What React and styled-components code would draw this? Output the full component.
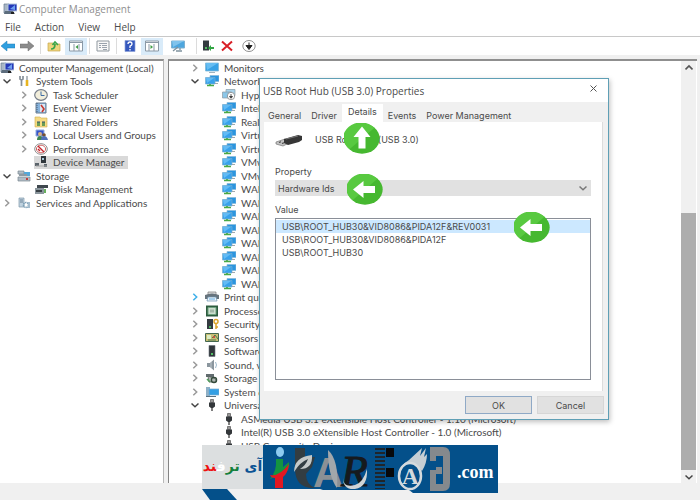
import React from 'react';
import styled, { createGlobalStyle } from 'styled-components';

const GlobalStyle = createGlobalStyle`
  * {
    box-sizing: border-box;
  }

  body {
    margin: 0;
    background: #f0f0f0;
    color: #4a4a4a;
    font-family: 'Open Sans', 'Noto Sans', sans-serif;
    font-size: 10px;
  }

  button, select {
    font: inherit;
    color: inherit;
  }

  svg {
    display: block;
    flex: none;
  }
`;

const Screen = styled.div`
  position: relative;
  display: flex;
  flex-direction: column;
  height: 100vh;
  overflow: hidden;
`;

const TitleBar = styled.header`
  display: flex;
  align-items: center;
  gap: 2px;
  height: 18px;
  padding: 0 3px;
  background: #fff;
  color: #8f8f8f;
`;

const MenuBar = styled.nav`
  display: flex;
  align-items: center;
  height: 19px;
  padding-left: 5px;
  gap: 14px;
  background: #fff;
  border-bottom: 1px solid #c8c8c8;
`;

const MenuButton = styled.button`
  padding: 0;
  border: 0;
  background: none;
`;

const Toolbar = styled.div`
  display: flex;
  align-items: center;
  height: 22px;
  background: #fff;
  border-bottom: 4px solid #f0f0f0;
`;

const ToolButton = styled.button`
  display: flex;
  align-items: center;
  justify-content: center;
  width: ${({ $width }) => $width || 22}px;
  height: 17px;
  padding: 0;
  border: 0;
  background: ${({ $active }) => ($active ? '#d9ebf9' : 'none')};
`;

const Separator = styled.span`
  width: 1px;
  height: 16px;
  margin: 0 ${({ $gap }) => $gap || 2}px;
  background: #dcdcdc;
`;

const Body = styled.main`
  flex: 1;
  display: flex;
  gap: 4px;
  min-height: 0;
  padding-right: 3px;
`;

const Pane = styled.section`
  display: flex;
  min-width: 0;
  background: #fff;
  border-top: 2px solid #8f8f8f;
`;

const TreePane = styled(Pane)`
  width: 164px;
  border-right: 1px solid #b8b8b8;
`;

const DevicePane = styled(Pane)`
  flex: 1;
  border-left: 1px solid #858585;
`;

const Tree = styled.ul`
  flex: 1;
  min-width: 0;
  margin: 0;
  padding: 0;
  list-style: none;
  overflow: hidden;
  font-family: Lato, 'Open Sans', sans-serif;
`;

const Row = styled.li`
  display: flex;
  align-items: center;
  height: 13px;
  padding-left: ${({ $indent }) => $indent}px;
  white-space: nowrap;

  &:nth-child(even) {
    height: 14px;
  }
`;

const Arrow = styled.span`
  display: flex;
  justify-content: center;
  width: 10px;
  margin-right: 5px;
`;

const Label = styled.span`
  display: flex;
  align-items: center;
  gap: 5px;
  height: 13px;
  padding-right: 3px;
  background: ${({ $selected }) => ($selected ? '#d9d9d9' : 'none')};
`;

const ScrollBar = styled.div`
  display: flex;
  flex-direction: column;
  width: 16px;
  background: #f0f0f0;
  border-right: 1px solid #fff;
`;

const ScrollButton = styled.button`
  display: flex;
  align-items: center;
  justify-content: center;
  height: 13px;
  padding: 0;
  border: 0;
  background: #f0f0f0;
`;

const ScrollTrack = styled.div`
  flex: 1;
  display: flex;
  flex-direction: column;
  justify-content: flex-end;
`;

const ScrollThumb = styled.div`
  height: 65%;
  background: #adadad;
`;

const StatusBar = styled.footer`
  height: 17px;
  background: #f0f0f0;
`;

/* properties window */

const Dialog = styled.div`
  position: absolute;
  left: 37%;
  top: 78px;
  width: 50%;
  display: flex;
  flex-direction: column;
  background: #f0f0f0;
  border: 1px solid #5f9fb5;
  box-shadow: 1px 2px 5px rgba(0, 0, 0, 0.25);
  font-family: Inter, 'Liberation Sans', sans-serif;
  font-size: 9px;
`;

const DialogTitle = styled.div`
  display: flex;
  align-items: center;
  justify-content: space-between;
  height: 23px;
  padding: 0 11px 0 3px;
  background: #fff;
  font-family: 'Open Sans', 'Noto Sans', sans-serif;
  font-size: 10px;
`;

const CloseButton = styled.button`
  display: flex;
  padding: 0 0 4px;
  border: 0;
  background: none;
`;

const Tabs = styled.div`
  display: flex;
  align-items: flex-end;
  height: 20px;
  padding-left: 3px;
`;

const Tab = styled.button`
  height: ${({ $active }) => ($active ? 18 : 16)}px;
  padding: ${({ $active }) => ($active ? '0 6px 3px' : '2px 5px 0')};
  border: 0;
  background: ${({ $active }) => ($active ? '#fff' : '#f0f0f0')};
`;

const TabPanel = styled.div`
  display: flex;
  flex-direction: column;
  margin: 0 5px 0 4px;
  padding: 10px 11px 11px 11px;
  background: #fff;
  border-right: 1px solid #dcdcdc;
`;

const Device = styled.div`
  display: flex;
  align-items: flex-start;
  gap: 12px;
  height: 34px;
`;

const DeviceName = styled.span`
  padding-top: 2px;
`;

const FieldLabel = styled.label`
  height: 14px;
  line-height: 12px;
`;

const SelectBox = styled.div`
  display: grid;
  align-items: center;
  margin-bottom: 8px;
  background: #e1e1e1;

  > * {
    grid-area: 1 / 1;
  }

  svg {
    justify-self: end;
    margin-right: 4px;
    pointer-events: none;
  }
`;

const Select = styled.select`
  appearance: none;
  height: 16px;
  padding: 0 3px;
  border: 0;
  background: none;
`;

const ValueList = styled.ul`
  height: 162px;
  margin: 0;
  padding: 1px 0;
  list-style: none;
  border: 1px solid #8a8f98;
`;

const Value = styled.li`
  height: 13px;
  padding-left: 6px;
  line-height: 13px;
  background: ${({ $selected }) => ($selected ? '#cce8ff' : 'none')};
`;

const Actions = styled.div`
  display: flex;
  justify-content: flex-end;
  gap: 5px;
  padding: 5px 4px 5px;
`;

const ActionButton = styled.button`
  width: 67px;
  height: 18px;
  padding: 0;
  border: 1px solid ${({ $primary }) => ($primary ? '#8fa9c6' : '#d6d6d6')};
  background: #e1e1e1;
`;

const Marker = styled.span`
  position: absolute;
  left: ${({ $x }) => $x}%;
  top: ${({ $y }) => $y}px;
`;

/* site banner */

const Banner = styled.div`
  position: absolute;
  left: 202px;
  top: 445px;
  display: flex;
  align-items: flex-start;
`;

const BannerName = styled.div`
  width: 61px;
  height: 44px;
  background: #dcdfe0;
  color: #0b5394;
  font: bold 14px/42px 'DejaVu Sans', sans-serif;
  text-align: center;
  white-space: nowrap;
`;

const Tint = styled.span`
  color: ${({ $color }) => $color};
`;

const BannerTail = styled.svg`
  position: absolute;
  left: 0;
  top: 44px;
`;

const Chevron = ({ open, color = open ? '#444' : '#9a9a9a' }) => (
  <svg width="8" height="8" viewBox="0 0 8 8" fill="none" stroke={color} strokeWidth="1.5">
    <path d={open ? 'M0.5 2.5L4 5.7L7.5 2.5' : 'M2.3 0.8L5.7 4L2.3 7.2'} />
  </svg>
);

const shapes = {
  computer: (
    <>
      <path d="M1 1h5v9H1z" fill="#a9b7c6" stroke="#66788c" strokeWidth=".7" />
      <path d="M5 1h9v7H5z" fill="#2538b8" stroke="#b6c7dc" />
      <path d="M7 6l5-4v5z" fill="#6fa0f0" />
      <path d="M2 8h8l2 3H1z" fill="#5d6d7d" />
      <path d="M8 9h3v2H8z" fill="#222" />
    </>
  ),
  tools: (
    <>
      <path d="M3 1v3l1.5 1L6 4V1M4.500 5v6" stroke="#858f98" strokeWidth="1.7" fill="none" />
      <path d="M10 1v5" stroke="#8a949c" strokeWidth="1.300" />
      <path d="M10 5v6" stroke="#e8b420" strokeWidth="2.600" />
    </>
  ),
  clock: (
    <>
      <ellipse cx="7" cy="6" rx="6.300" ry="5.300" fill="#f2eedb" stroke="#747c88" strokeWidth="1.200" />
      <path d="M7 2.500V6.500h3.500" stroke="#3d6ca5" fill="none" />
    </>
  ),
  event: (
    <>
      <path d="M2 1h10v10H2z" fill="#86b3dd" stroke="#6b7f93" />
      <path d="M6 2h5v8H6z" fill="#d7e6f5" />
      <path d="M7 3l3 4-2 3" stroke="#c8372d" strokeWidth="1.600" fill="none" />
      <path d="M3 1v10" stroke="#49617a" strokeDasharray="1 1" />
    </>
  ),
  folder: (
    <>
      <path d="M1 1h5l1 1h6v9H1z" fill="#f6db83" stroke="#d2b04c" strokeWidth=".6" />
      <path d="M3 6h3v4H3zM8 6h3v4H8z" fill="#6b9c55" />
      <path d="M3 6h3M8 6h3" stroke="#34536e" />
    </>
  ),
  users: (
    <>
      <path d="M2 1h8v6H2z" fill="#3655c8" stroke="#93aee0" />
      <circle cx="6" cy="5" r="2" fill="#d9b48a" />
      <path d="M3 11q0-4 3-4t3 4z" fill="#3e8650" />
      <circle cx="10" cy="6" r="1.800" fill="#76512f" />
      <path d="M7 11q0-4 3-4t4 4z" fill="#5070b8" />
    </>
  ),
  performance: (
    <>
      <ellipse cx="7" cy="6" rx="6.300" ry="5.300" fill="#fff" stroke="#8b8b8b" />
      <ellipse cx="7" cy="6" rx="4.600" ry="3.800" fill="none" stroke="#cf6464" />
      <path d="M4 3l6 6M4 6l2 2" stroke="#c4232b" strokeWidth="1.400" />
    </>
  ),
  device: (
    <>
      <path d="M7 0h5v7H7z" fill="#30363b" />
      <path d="M8 2h2v2H8z" fill="#a8c8d8" />
      <path d="M1 7h4v3H1zM10 8h3v3h-3z" fill="#5b646b" />
      <path d="M2 10h11" stroke="#a6a6a6" />
    </>
  ),
  storage: (
    <>
      <path d="M1 1h6v3H1zM1 7h12v4H1z" fill="#b2bdc6" stroke="#7a8791" strokeWidth=".7" />
      <path d="M7 2h6v4H7z" fill="#54a8da" />
      <path d="M2 5h8" stroke="#8d9aa4" strokeWidth="2" />
      <path d="M9 8h2v2H9z" fill="#c04040" />
    </>
  ),
  disk: (
    <>
      <path d="M3 2h11v3H3z" fill="#3f484e" />
      <path d="M1 5h9v6H1z" fill="#8b969d" />
      <path d="M2 7h6v2H2z" fill="#394146" />
      <path d="M10 6h2v4h-2z" fill="#67af5c" />
    </>
  ),
  services: (
    <>
      <path d="M2 1h5v9H2z" fill="#c0d2df" stroke="#7e98ab" strokeWidth=".7" />
      <path d="M3 3h3M3 5h3" stroke="#6a8296" />
      <circle cx="9" cy="8" r="2.500" fill="none" stroke="#7da0b8" strokeWidth="1.600" strokeDasharray="1.500 .6" />
      <path d="M11 5h2v6h-2z" fill="#a4bccd" />
    </>
  ),
  monitor: (
    <>
      <path d="M0.500 1h13v8h-13z" fill="#38a2e6" stroke="#82b7d6" strokeWidth=".8" />
      <path d="M1 1h12L2 8z" fill="#66bdf2" />
      <path d="M4 10.500h6" stroke="#9fb4c0" />
    </>
  ),
  network: (
    <>
      <path d="M5 .5h9v6H5z" fill="#2b95df" stroke="#8abada" strokeWidth=".7" />
      <path d="M.5 2.500h9.500v6.500h-9.500z" fill="#38a2ec" stroke="#77aed0" strokeWidth=".7" />
      <path d="M1 3h8L2 8z" fill="#62bbf5" />
      <path d="M5 9v2M2 10.500h7" stroke="#48a947" strokeWidth="1.700" />
      <path d="M10 8.500h3" stroke="#9fa9ad" />
    </>
  ),
  networkOff: (
    <>
      <path d="M4 .5h9v6H4z" fill="#a8d3ec" stroke="#879da8" strokeWidth=".7" />
      <path d="M.5 3h9v6h-9z" fill="#8bc7e9" stroke="#8b9aa3" strokeWidth=".7" />
      <circle cx="9" cy="7" r="3.700" fill="#fff" stroke="#777" strokeWidth=".7" />
      <path d="M9 5v3M7.500 7.500h3L9 9.300z" fill="#333" stroke="#333" strokeWidth=".8" />
    </>
  ),
  printer: (
    <>
      <path d="M3 1h8v3H3z" fill="#ddd" stroke="#777" strokeWidth=".7" />
      <path d="M0 4q7-3 14 0v4H0z" fill="#68747d" />
      <path d="M3 6h8l1 4H2z" fill="#eef5fb" stroke="#6892b2" strokeWidth=".7" />
      <path d="M4 8h6" stroke="#61a9de" />
    </>
  ),
  cpu: (
    <>
      <path d="M1 .5h12v11H1z" fill="#2d5c3f" />
      <path d="M3 2.500h8v7H3z" fill="#cddfd0" stroke="#6ea27e" />
      <path d="M5 4.500h4v3H5z" fill="#a2b8a7" />
    </>
  ),
  security: (
    <>
      <path d="M2 1h6v10H2z" fill="#343b40" />
      <path d="M4 8h2v2H4z" fill="#47b45b" />
      <circle cx="11" cy="3.500" r="2" fill="none" stroke="#dda42b" strokeWidth="1.500" />
      <path d="M11 6v5M11 9h2" stroke="#dda42b" strokeWidth="1.500" />
    </>
  ),
  sensor: (
    <>
      <path d="M.5 1.500h13v8H.5z" fill="#c9bd75" stroke="#44684f" />
      <path d="M2 3h4v4H2z" fill="#dcecc1" />
      <path d="M7 6l3-3 3 4M3 8h8" stroke="#4b7d52" fill="none" />
      <path d="M8 4h2v2H8z" fill="#c95340" />
    </>
  ),
  software: (
    <>
      <path d="M4 .5h6v11H4z" fill="#30363a" stroke="#687178" strokeWidth=".6" />
      <path d="M6 8h2v2H6z" fill="#54bf66" />
    </>
  ),
  sound: (
    <>
      <path d="M2 4h3l4-3.500v11L5 8H2z" fill="#8b969e" />
      <path d="M6 3v6" stroke="#bfc7cc" />
      <path d="M10.500 3q2 3 0 6" stroke="#9eb9cb" fill="none" />
    </>
  ),
  controller: (
    <>
      <path d="M1 2h8v3H1z" fill="#626c70" />
      <path d="M3 4l8 3v3H4z" fill="#aeb6b2" stroke="#525c58" strokeWidth=".8" />
      <circle cx="9" cy="8" r="2.600" fill="none" stroke="#334a3a" strokeWidth="1.300" />
      <path d="M2 7l3 3" stroke="#51a05a" strokeWidth="1.500" />
    </>
  ),
  system: (
    <>
      <path d="M1 1h4v9H1z" fill="#8fb0c6" />
      <path d="M4 3h10v6H4z" fill="#339fe4" stroke="#78acd0" strokeWidth=".7" />
      <path d="M1 10.500h10" stroke="#59707f" />
    </>
  ),
  usb: (
    <>
      <path d="M5.500 .5h3v3h-3z" fill="#999" stroke="#555" strokeWidth=".7" />
      <path d="M4 3.500h6v4L8 9H6L4 7.500z" fill="#33373a" />
      <path d="M7 9v3" stroke="#555" strokeWidth="1.500" />
    </>
  ),
  back: <path d="M0 6l6-5v3h8v4H6v3z" fill="#2f9fe0" stroke="#237db3" strokeWidth=".5" />,
  forward: <path d="M14 6L8 1v3H0v4h8v3z" fill="#8b8b8b" stroke="#6d6d6d" strokeWidth=".5" />,
  up: (
    <>
      <path d="M1 3h5l1 1h6v7H1z" fill="#efd47d" stroke="#c5a64d" strokeWidth=".7" />
      <path d="M4 9q4 0 4-5M5.500 5L8 2l3 3" stroke="#39a54a" strokeWidth="1.700" fill="none" />
    </>
  ),
  panelLeft: (
    <>
      <path d="M.5 1h13v10H.5z" fill="#fff" stroke="#8b99a6" />
      <path d="M1 2.500h12M5 4v7M10 4v7" stroke="#8b99a6" />
      <path d="M9 5v4L6.500 7z" fill="#3e9c44" />
    </>
  ),
  panelRight: (
    <>
      <path d="M.5 1h13v10H.5z" fill="#fff" stroke="#8b99a6" />
      <path d="M1 2.500h12M4 4v7M9 4v7" stroke="#8b99a6" />
      <path d="M5.500 5v4L8 7z" fill="#3e9c44" />
    </>
  ),
  properties: (
    <>
      <path d="M1 1h12v10H1z" fill="#f8f8f8" stroke="#8f989f" />
      <path d="M3 3.500h8M3 5.500h2M6 5.500h5M3 7.500h2M6 7.500h5M7 9.500h4" stroke="#9aa3ad" />
    </>
  ),
  help: (
    <>
      <path d="M2 .5h10v11H2z" fill="#3558bd" stroke="#8da0d8" strokeWidth=".7" />
      <path d="M5 4q0-2 2-2t2 2q0 1.200-2 2.200V8M7 9v1.500" stroke="#fff" strokeWidth="1.300" fill="none" />
    </>
  ),
  scan: (
    <>
      <path d="M.5 1h13v7H.5z" fill="#4da6de" stroke="#7eb1d1" />
      <path d="M2 11l5-4M9 8v2M5 11h6" stroke="#7f929e" strokeWidth="1.300" />
      <path d="M1 1h12L2 7z" fill="#80c3ec" />
    </>
  ),
  update: (
    <>
      <path d="M2 .5h6v10H2z" fill="#343b40" />
      <path d="M4 7h2v2H4z" fill="#54bf66" />
      <path d="M7 8l3-3v2h3v2h-3v2z" fill="#33a644" />
    </>
  ),
  remove: <path d="M2 1.500l10 9M12 1.500l-10 9" stroke="#d81f26" strokeWidth="2" />,
  disable: (
    <>
      <ellipse cx="7" cy="6" rx="6.200" ry="5.500" fill="#fff" stroke="#777" strokeWidth=".8" />
      <path d="M7 2.500v4M4 5.500h6L7 9.500z" fill="#222" stroke="#222" strokeWidth="1" />
    </>
  ),
};

const Icon = ({ name }) => (
  <svg width="14" height="12" viewBox="0 0 14 12">
    {shapes[name]}
  </svg>
);

const consoleTree = [
  { text: 'System Tools', icon: 'tools', level: 0, open: true },
  { text: 'Task Scheduler', icon: 'clock', level: 1, open: false },
  { text: 'Event Viewer', icon: 'event', level: 1, open: false },
  { text: 'Shared Folders', icon: 'folder', level: 1, open: false },
  { text: 'Local Users and Groups', icon: 'users', level: 1, open: false },
  { text: 'Performance', icon: 'performance', level: 1, open: false },
  { text: 'Device Manager', icon: 'device', level: 1, selected: true },
  { text: 'Storage', icon: 'storage', level: 0, open: true },
  { text: 'Disk Management', icon: 'disk', level: 1 },
  { text: 'Services and Applications', icon: 'services', level: 0, open: false },
];

const adapters = [
  'Hyper-V Virtual Ethernet Adapter',
  'Intel(R) Ethernet Connection',
  'Realtek PCIe GBE Family Controller',
  'VirtualBox Host-Only Adapter',
  'VirtualBox Host-Only Adapter #2',
  'VMware Virtual Adapter VMnet1',
  'VMware Virtual Adapter VMnet8',
  'WAN Miniport (IKEv2)',
  'WAN Miniport (IP)',
  'WAN Miniport (IPv6)',
  'WAN Miniport (L2TP)',
  'WAN Miniport (Monitor)',
  'WAN Miniport (PPPOE)',
  'WAN Miniport (PPTP)',
  'WAN Miniport (SSTP)',
];

const deviceTree = [
  { text: 'Monitors', icon: 'monitor', level: 0, open: false },
  { text: 'Network adapters', icon: 'network', level: 0, open: true },
  ...adapters.map((text, i) => ({ text, icon: i ? 'network' : 'networkOff', level: 1 })),
  { text: 'Print queues', icon: 'printer', level: 0, open: false, hot: true },
  { text: 'Processors', icon: 'cpu', level: 0, open: false },
  { text: 'Security devices', icon: 'security', level: 0, open: false },
  { text: 'Sensors', icon: 'sensor', level: 0, open: false },
  { text: 'Software devices', icon: 'software', level: 0, open: false },
  { text: 'Sound, video and game controllers', icon: 'sound', level: 0, open: false },
  { text: 'Storage controllers', icon: 'controller', level: 0, open: false },
  { text: 'System devices', icon: 'system', level: 0, open: false },
  { text: 'Universal Serial Bus controllers', icon: 'usb', level: 0, open: true },
  { text: 'ASMedia USB 3.1 eXtensible Host Controller - 1.10 (Microsoft)', icon: 'usb', level: 1 },
  { text: 'Intel(R) USB 3.0 eXtensible Host Controller - 1.0 (Microsoft)', icon: 'usb', level: 1 },
  { text: 'USB Composite Device', icon: 'usb', level: 1 },
];

const TreeRow = ({ item, base }) => (
  <Row $indent={base + item.level * 17}>
    <Arrow>
      {item.open !== undefined && <Chevron open={item.open} color={item.hot ? '#3fb0ea' : undefined} />}
    </Arrow>
    <Label $selected={item.selected}>
      <Icon name={item.icon} />
      {item.text}
    </Label>
  </Row>
);

const GreenArrow = ({ rotate = 0 }) => (
  <svg width="36" height="31" viewBox="0 0 36 31">
    <ellipse cx="18" cy="15.500" rx="17.700" ry="15.200" fill="#46b830" />
    <path d="M5.500 26.200A17.700 15.200 0 1 1 30.500 4.800z" fill="#58c940" />
    <path
      d="M6 15.500L16.500 7v5H28v7H16.500v5z"
      fill="#fff"
      transform={`rotate(${rotate} 18 15.500)`}
    />
  </svg>
);

const UsbPlug = () => (
  <svg width="28" height="16" viewBox="0 0 28 16">
    <path d="M1 10l9-3 6 3-8 4-7-2z" fill="#c3c3c3" stroke="#777" strokeWidth=".7" />
    <path d="M4 10.500l2-.7M7 11.500l2-.8" stroke="#444" strokeWidth="1.200" />
    <path d="M9 7l14-4 4 1v4l-3 2-11 3-4-2z" fill="#363636" />
    <path d="M11 7l12-3" stroke="#777" />
  </svg>
);

const BannerArt = () => (
  <svg width="235" height="48" viewBox="0 0 235 48">
    <path d="M0 0h235v48H150l-4-3H60l-3-1H0z" fill="#04508a" />
    {/* figure */}
    <ellipse cx="17" cy="7" rx="4" ry="5" fill="#8ecbf0" />
    <path d="M13 14h7v8l6-5q2 9-7 12l-12 5q7-8 6-20z" fill="#149440" />
    <path d="M7 30q9 2 19-11-1 9-6 13v11h-8V33q-4 0-5-3z" fill="#e21822" />
    {/* crescent and leaf */}
    <path d="M32 3h10v9h10l-3 10-6 7q0 10 9 14-20 1-20-20z" fill="#333d42" />
    <path d="M31 27q0-15 18-17 1 14-12 14 6-4 8-10-8 3-14 13z" fill="#c5c9c9" />
    {/* ribbon A */}
    <text x="50" y="42" fontFamily="Liberation Sans, sans-serif" fontWeight="bold" fontSize="42" fill="#8b9095">A</text>
    <path d="M65 5q11 10 9 38-9-12-9-38z" fill="#a3a7ab" />
    <text x="78" y="41" fontFamily="Liberation Serif, serif" fontStyle="italic" fontSize="44" stroke="#161a1d" fill="#161a1d">R</text>
    <path d="M80 33q0 10 12 7 8-2 12-16 1 18-12 20-12 1-12-11z" fill="#cfd4d6" />
    {/* film strip */}
    <path d="M117 3v41" stroke="#20252a" strokeWidth="10" strokeDasharray="2 2" />
    <path d="M123 3h8v9h-8zM123 23h8v9h-8z" fill="#07090b" />
    {/* flaming A */}
    <path d="M137 29q0-9 9-14l13-12-2 8 6-8-2 9 3-3q0 9-5 17l-5-5-8-3z" fill="#c6ced4" />
    <ellipse cx="147" cy="31" rx="11" ry="13" fill="#04508a" stroke="#d5dadd" strokeWidth="2.500" />
    <text x="139" y="39" fontFamily="Liberation Serif, serif" fontWeight="bold" fontSize="23" fill="#d5dadd">A</text>
    {/* bracket */}
    <path d="M167 2h13q7 0 7 8v28q0 8-7 8h-13V25h6v-3h6v7h-6v10h7V11h-7v5h-6z" fill="#85898d" />
    <text x="194" y="33" fontFamily="Liberation Serif, serif" fontWeight="bold" fontSize="18" fill="#fff">.com</text>
  </svg>
);

const App = () => {
  return (
    <Screen>
      <GlobalStyle />
      <TitleBar>
        <Icon name="computer" />
        Computer Management
      </TitleBar>
      <MenuBar>
        {['File', 'Action', 'View', 'Help'].map((name) => (
          <MenuButton key={name}>{name}</MenuButton>
        ))}
      </MenuBar>
      <Toolbar>
        <ToolButton aria-label="Back" $width={16}><Icon name="back" /></ToolButton>
        <ToolButton aria-label="Forward"><Icon name="forward" /></ToolButton>
        <Separator />
        <ToolButton aria-label="Up"><Icon name="up" /></ToolButton>
        <ToolButton aria-label="Console tree" $active><Icon name="panelLeft" /></ToolButton>
        <Separator />
        <ToolButton aria-label="Properties"><Icon name="properties" /></ToolButton>
        <Separator />
        <ToolButton aria-label="Help"><Icon name="help" /></ToolButton>
        <ToolButton aria-label="Action pane" $active><Icon name="panelRight" /></ToolButton>
        <ToolButton aria-label="Scan" $width={30}><Icon name="scan" /></ToolButton>
        <Separator $gap={3} />
        <ToolButton aria-label="Update" $width={16}><Icon name="update" /></ToolButton>
        <ToolButton aria-label="Uninstall"><Icon name="remove" /></ToolButton>
        <ToolButton aria-label="Disable"><Icon name="disable" /></ToolButton>
      </Toolbar>
      <Body>
        <TreePane>
          <Tree>
            <Row $indent={0}>
              <Label>
                <Icon name="computer" />
                Computer Management (Local)
              </Label>
            </Row>
            {consoleTree.map((item) => (
              <TreeRow key={item.text} item={item} base={2} />
            ))}
          </Tree>
        </TreePane>
        <DevicePane>
          <Tree>
            {deviceTree.map((item) => (
              <TreeRow key={item.text} item={item} base={21} />
            ))}
          </Tree>
          <ScrollBar>
            <ScrollButton aria-label="Scroll up">
              <svg width="8" height="8" viewBox="0 0 8 8" fill="none" stroke="#555" strokeWidth="1.700">
                <path d="M.5 5.500L4 2l3.500 3.500" />
              </svg>
            </ScrollButton>
            <ScrollTrack>
              <ScrollThumb />
            </ScrollTrack>
            <ScrollButton aria-label="Scroll down">
              <Chevron open />
            </ScrollButton>
          </ScrollBar>
        </DevicePane>
      </Body>
      <StatusBar />

      <Dialog role="dialog" aria-label="USB Root Hub (USB 3.0) Properties">
        <DialogTitle>
          USB Root Hub (USB 3.0) Properties
          <CloseButton aria-label="Close">
            <svg width="7" height="7" viewBox="0 0 7 7" stroke="#555">
              <path d="M.5 .5l6 6M6.500 .5l-6 6" />
            </svg>
          </CloseButton>
        </DialogTitle>
        <Tabs>
          {['General', 'Driver', 'Details', 'Events', 'Power Management'].map((name) => (
            <Tab key={name} $active={name === 'Details'}>{name}</Tab>
          ))}
        </Tabs>
        <TabPanel>
          <Device>
            <UsbPlug />
            <DeviceName>USB Root Hub (USB 3.0)</DeviceName>
          </Device>
          <FieldLabel htmlFor="property">Property</FieldLabel>
          <SelectBox>
            <Select id="property">
              <option>Hardware Ids</option>
            </Select>
            <Chevron open color="#777" />
          </SelectBox>
          <FieldLabel as="div">Value</FieldLabel>
          <ValueList>
            <Value $selected>USB\ROOT_HUB30&amp;VID8086&amp;PIDA12F&amp;REV0031</Value>
            <Value>USB\ROOT_HUB30&amp;VID8086&amp;PIDA12F</Value>
            <Value>USB\ROOT_HUB30</Value>
          </ValueList>
        </TabPanel>
        <Actions>
          <ActionButton $primary>OK</ActionButton>
          <ActionButton>Cancel</ActionButton>
        </Actions>
        <Marker $x={24} $y={44}><GreenArrow rotate={90} /></Marker>
        <Marker $x={25} $y={95}><GreenArrow /></Marker>
        <Marker $x={73} $y={133}><GreenArrow /></Marker>
      </Dialog>

      <Banner>
        <BannerName dir="rtl" lang="fa">
          آی <Tint $color="#15803d">تر</Tint>
          <Tint $color="#fff">ف</Tint>
          <Tint $color="#e11">ند</Tint>
        </BannerName>
        <BannerArt />
        <BannerTail width="36" height="11" viewBox="0 0 36 11">
          <path d="M0 0h25l10 11H8z" fill="#04508a" />
        </BannerTail>
      </Banner>
    </Screen>
  );
};

export default App;
